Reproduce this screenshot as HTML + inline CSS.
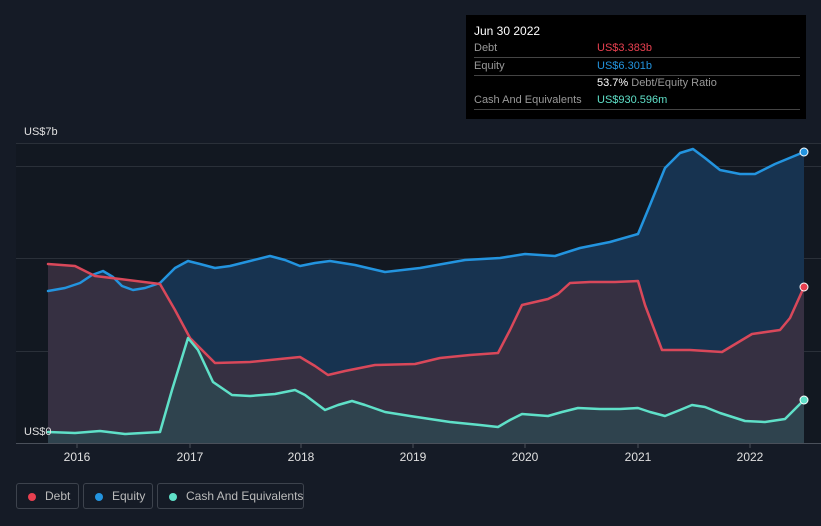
<!DOCTYPE html><html><head><meta charset="utf-8"><style>
body{margin:0;width:821px;height:526px;background:#151b26;font-family:"Liberation Sans",sans-serif;overflow:hidden;position:relative}
.tt{position:absolute;left:466px;top:15px;width:340px;height:104px;background:#000;color:#fff;font-size:11px}
.tt .r{position:absolute;left:8px;width:326px;border-bottom:1px solid #444;height:17px;line-height:17px;color:#999;white-space:nowrap}
.leg{position:absolute;top:483px;height:26px;border:1px solid #3d434d;border-radius:3px;color:#bbb;font-size:12px;line-height:25px;box-sizing:border-box;white-space:nowrap}
.leg i{position:absolute;left:11px;top:9px;width:8px;height:8px;border-radius:50%}
</style></head><body>
<svg width="821" height="526" style="position:absolute;left:0;top:0">
<rect x="16" y="143" width="805" height="300" fill="#121821"/>
<g stroke="#2a3039" stroke-width="1"><line x1="16" y1="143.5" x2="821" y2="143.5"/><line x1="16" y1="166.5" x2="821" y2="166.5"/><line x1="16" y1="258.5" x2="821" y2="258.5"/><line x1="16" y1="351.5" x2="821" y2="351.5"/></g>
<polygon fill="#173350" points="48,443 48,291 65,288 80,283 92,275 103,271 113,277 122,286 133,290 145,288 160,283 175,268 188,261 200,264 215,268 230,266 250,261 270,256 285,260 300,266 315,263 330,261 355,265 385,272 420,268 465,260 500,258 525,254 555,256 580,248 610,242 638,234 650,205 665,168 680,153 693,149 705,158 720,170 740,174 755,174 775,164 804,152 804,443"/>
<polygon fill="#3a3040" fill-opacity=".9" points="48,443 48,264 75,266 85,271 95,276 120,279 160,284 175,310 190,338 215,363 250,362 280,359 300,357 315,366 328,375 345,371 375,365 415,364 440,358 470,355 498,353 510,330 522,305 548,299 558,294 570,283 590,282 615,282 638,281 645,305 662,350 690,350 722,352 752,334 780,330 790,318 804,287 804,443"/>
<polygon fill="#2f4650" fill-opacity=".9" points="48,443 48,432 75,433 100,431 125,434 160,432 172,390 188,338 198,350 213,382 232,395 250,396 275,394 295,390 305,395 325,410 338,405 352,401 365,405 385,412 410,416 450,422 480,425 498,427 510,420 522,414 548,416 562,412 578,408 600,409 620,409 638,408 650,412 665,416 680,410 692,405 705,407 720,413 745,421 765,422 785,419 804,400 804,443"/>
<g fill="none" stroke-width="2.5" stroke-linejoin="round" stroke-linecap="round">
<polyline stroke="#2394df" points="48,291 65,288 80,283 92,275 103,271 113,277 122,286 133,290 145,288 160,283 175,268 188,261 200,264 215,268 230,266 250,261 270,256 285,260 300,266 315,263 330,261 355,265 385,272 420,268 465,260 500,258 525,254 555,256 580,248 610,242 638,234 650,205 665,168 680,153 693,149 705,158 720,170 740,174 755,174 775,164 804,152"/>
<polyline stroke="#d9485a" points="48,264 75,266 85,271 95,276 120,279 160,284 175,310 190,338 215,363 250,362 280,359 300,357 315,366 328,375 345,371 375,365 415,364 440,358 470,355 498,353 510,330 522,305 548,299 558,294 570,283 590,282 615,282 638,281 645,305 662,350 690,350 722,352 752,334 780,330 790,318 804,287"/>
<polyline stroke="#5fe0c8" points="48,432 75,433 100,431 125,434 160,432 172,390 188,338 198,350 213,382 232,395 250,396 275,394 295,390 305,395 325,410 338,405 352,401 365,405 385,412 410,416 450,422 480,425 498,427 510,420 522,414 548,416 562,412 578,408 600,409 620,409 638,408 650,412 665,416 680,410 692,405 705,407 720,413 745,421 765,422 785,419 804,400"/>
</g>
<circle cx="804" cy="152" r="4" fill="#2394df" stroke="#fff" stroke-width="1"/>
<circle cx="804" cy="287" r="4" fill="#e84050" stroke="#fff" stroke-width="1"/>
<circle cx="804" cy="400" r="4" fill="#5fe0c8" stroke="#fff" stroke-width="1"/>
<line x1="16" y1="443.5" x2="821" y2="443.5" stroke="#4a505a"/>
<g stroke="#4a505a"><line x1="77" y1="443" x2="77" y2="448"/><line x1="190" y1="443" x2="190" y2="448"/><line x1="301" y1="443" x2="301" y2="448"/><line x1="413" y1="443" x2="413" y2="448"/><line x1="525" y1="443" x2="525" y2="448"/><line x1="638" y1="443" x2="638" y2="448"/><line x1="750" y1="443" x2="750" y2="448"/></g>
<g fill="#e0e0e0" font-size="12" text-anchor="middle" font-family="Liberation Sans"><text x="77" y="461">2016</text><text x="190" y="461">2017</text><text x="301" y="461">2018</text><text x="413" y="461">2019</text><text x="525" y="461">2020</text><text x="638" y="461">2021</text><text x="750" y="461">2022</text></g>
<text x="24" y="135" fill="#e0e0e0" font-size="11">US$7b</text>
<text x="24" y="435" fill="#e0e0e0" font-size="11">US$0</text>
</svg>
<div class="tt">
<div style="position:absolute;left:8px;top:9px;font-size:12px">Jun 30 2022</div>
<div class="r" style="top:25px">Debt<span style="position:absolute;left:123px;color:#e84050">US$3.383b</span></div>
<div class="r" style="top:43px">Equity<span style="position:absolute;left:123px;color:#2394df">US$6.301b</span></div>
<div class="r" style="top:60px;border:none"><span style="position:absolute;left:123px;color:#fff">53.7% <span style="color:#999">Debt/Equity Ratio</span></span></div>
<div class="r" style="top:77px">Cash And Equivalents<span style="position:absolute;left:123px;color:#5fe0c8">US$930.596m</span></div>
</div>
<div class="leg" style="left:16px;width:63px"><i style="background:#e84050"></i><span style="position:absolute;left:28px">Debt</span></div>
<div class="leg" style="left:83px;width:70px"><i style="background:#2394df"></i><span style="position:absolute;left:28px">Equity</span></div>
<div class="leg" style="left:157px;width:147px"><i style="background:#5fe0c8"></i><span style="position:absolute;left:28px">Cash And Equivalents</span></div>
</body></html>
